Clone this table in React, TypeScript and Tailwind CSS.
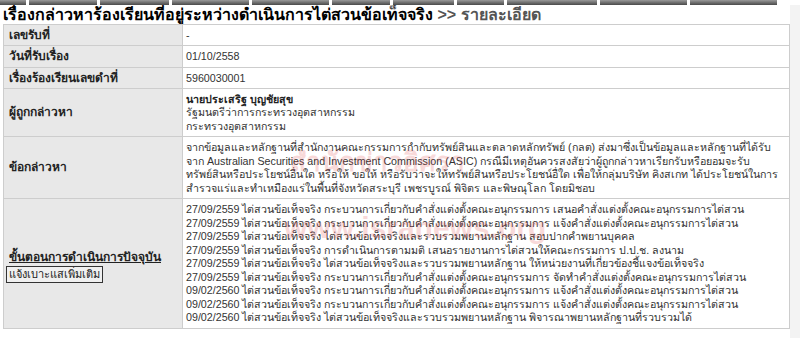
import React from 'react';

const tabs = [26, 68, 69, 77, 77, 58, 61, 47, 90, 87, 87];

const accusation = [
  'จากข้อมูลและหลักฐานที่สำนักงานคณะกรรมการกำกับทรัพย์สินและตลาดหลักทรัพย์ (กลต) ส่งมาซึ่งเป็นข้อมูลและหลักฐานที่ได้รับ',
  'จาก Australian Securities and Investment Commission (ASIC) กรณีมีเหตุอันควรสงสัยว่าผู้ถูกกล่าวหาเรียกรับหรือยอมจะรับ',
  'ทรัพย์สินหรือประโยชน์อื่นใด หรือให้ ขอให้ หรือรับว่าจะให้ทรัพย์สินหรือประโยชน์อื่ใด เพื่อให้กลุ่มบริษัท คิงสเกท ได้ประโยชน์ในการ',
  'สำรวจแร่และทำเหมืองแร่ในพื้นที่จังหวัดสระบุรี เพชรบูรณ์ พิจิตร และพิษณุโลก โดยมิชอบ',
];

const steps = [
  '27/09/2559 ไต่สวนข้อเท็จจริง กระบวนการเกี่ยวกับคำสั่งแต่งตั้งคณะอนุกรรมการ เสนอคำสั่งแต่งตั้งคณะอนุกรรมการไต่สวน',
  '27/09/2559 ไต่สวนข้อเท็จจริง กระบวนการเกี่ยวกับคำสั่งแต่งตั้งคณะอนุกรรมการ แจ้งคำสั่งแต่งตั้งคณะอนุกรรมการไต่สวน',
  '27/09/2559 ไต่สวนข้อเท็จจริง ไต่สวนข้อเท็จจริงและรวบรวมพยานหลักฐาน สอบปากคำพยานบุคคล',
  '27/09/2559 ไต่สวนข้อเท็จจริง การดำเนินการตามมติ เสนอรายงานการไต่สวนให้คณะกรรมการ ป.ป.ช. ลงนาม',
  '27/09/2559 ไต่สวนข้อเท็จจริง ไต่สวนข้อเท็จจริงและรวบรวมพยานหลักฐาน ให้หน่วยงานที่เกี่ยวข้องชี้แจงข้อเท็จจริง',
  '27/09/2559 ไต่สวนข้อเท็จจริง กระบวนการเกี่ยวกับคำสั่งแต่งตั้งคณะอนุกรรมการ จัดทำคำสั่งแต่งตั้งคณะอนุกรรมการไต่สวน',
  '09/02/2560 ไต่สวนข้อเท็จจริง กระบวนการเกี่ยวกับคำสั่งแต่งตั้งคณะอนุกรรมการ แจ้งคำสั่งแต่งตั้งคณะอนุกรรมการไต่สวน',
  '09/02/2560 ไต่สวนข้อเท็จจริง กระบวนการเกี่ยวกับคำสั่งแต่งตั้งคณะอนุกรรมการ แจ้งคำสั่งแต่งตั้งคณะอนุกรรมการไต่สวน',
  '09/02/2560 ไต่สวนข้อเท็จจริง ไต่สวนข้อเท็จจริงและรวบรวมพยานหลักฐาน พิจารณาพยานหลักฐานที่รวบรวมได้',
];

// one fixed-height text line, so the Thai fallback font can't stretch the rows
function Line({ children, className = 'h-[13.5px]' }: { children: React.ReactNode; className?: string }) {
  return <div className={`whitespace-nowrap ${className}`}>{children}</div>;
}

function Row({ label, children }: { label: React.ReactNode; children: React.ReactNode }) {
  return (
    <tr>
      <td className="border border-[#cdcdcd] bg-[#e8e8e8] px-[5px] pt-[4px] pb-[3px] align-middle text-[12px] font-bold whitespace-nowrap text-[#222]">
        {label}
      </td>
      <td className="overflow-hidden border border-[#cdcdcd] bg-white px-[3px] pt-[4px] pb-[3px] align-middle text-[10.7px] text-[#333]">
        {children}
      </td>
    </tr>
  );
}

export default function App() {
  return (
    <div className="relative flex h-[338px] w-[800px] flex-col overflow-hidden bg-white font-['Liberation_Sans',sans-serif] text-[12px] leading-[13.5px]">
      {/* strip of menu tabs cut off at the top */}
      <div className="flex h-[5px] gap-[3px] bg-white">
        {tabs.map((w, i) => (
          <div key={i} style={{ width: w }} className="h-full bg-gradient-to-b from-[#9a9a9a] to-[#4a4a4a]" />
        ))}
      </div>

      <div className="flex flex-1">
        <div className="w-[790px] pl-[3px]">
          <h1 className="h-[19px] overflow-hidden text-[16px] leading-[19px] font-bold text-black whitespace-nowrap">
            เรื่องกล่าวหาร้องเรียนที่อยู่ระหว่างดำเนินการไต่สวนข้อเท็จจริง{' '}
            <span className="text-[#555]">&gt;&gt; รายละเอียด</span>
          </h1>

          <table className="w-full table-fixed border-collapse">
            <colgroup>
              <col className="w-[179px]" />
              <col />
            </colgroup>
            <tbody>
              <Row label={<Line className="h-[13px]">เลขรับที่</Line>}>
                <Line className="h-[13px]">-</Line>
              </Row>
              <Row label={<Line>วันที่รับเรื่อง</Line>}>
                <Line>01/10/2558</Line>
              </Row>
              <Row label={<Line className="h-[13px]">เรื่องร้องเรียนเลขดำที่</Line>}>
                <Line className="h-[13px]">5960030001</Line>
              </Row>
              <Row label={<Line>ผู้ถูกกล่าวหา</Line>}>
                <Line className="h-[13.5px] font-bold text-[#222]">นายประเสริฐ บุญชัยสุข</Line>
                <Line>รัฐมนตรีว่าการกระทรวงอุตสาหกรรม</Line>
                <Line>กระทรวงอุตสาหกรรม</Line>
              </Row>
              <Row label={<Line>ข้อกล่าวหา</Line>}>
                {accusation.map((line) => (
                  <Line key={line}>{line}</Line>
                ))}
              </Row>
              <Row
                label={
                  <div className="pt-[6px]">
                    <Line className="h-[13.5px] underline">ขั้นตอนการดำเนินการปัจจุบัน</Line>
                    <button className="-ml-[3px] mt-[1px] block h-[17px] overflow-hidden border border-[#333] bg-[#f0f0f0] px-[2px] text-[11px] font-normal leading-[15px] text-[#222]">
                      แจ้งเบาะแสเพิ่มเติม
                    </button>
                  </div>
                }
              >
                {steps.map((line, i) => (
                  <Line key={i}>{line}</Line>
                ))}
              </Row>
            </tbody>
          </table>
        </div>
        <div className="flex-1 bg-[#f3f3f3]" />
      </div>

      {/* watermark stamped over the table */}
      <div className="pointer-events-none absolute left-[290px] top-[146px] text-[26px] leading-[32px] font-bold text-[#e04848] opacity-20">
        สำนักข่าวอิศรา
      </div>
      <div className="pointer-events-none absolute left-[284px] top-[210px] text-[30px] leading-[36px] font-bold text-[#e04848] opacity-20">
        www.isranews.org
      </div>
    </div>
  );
}
